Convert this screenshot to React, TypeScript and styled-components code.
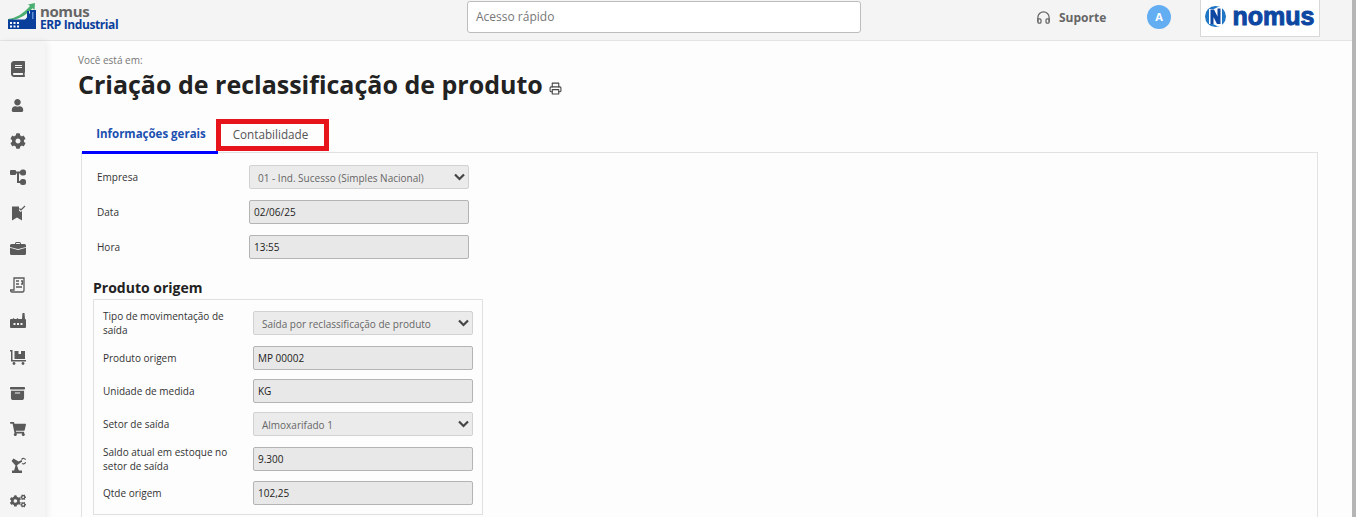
import React from 'react';
import styled, { createGlobalStyle } from 'styled-components';
import { FaBook, FaCog, FaCogs, FaShoppingCart, FaUser } from 'react-icons/fa';
import { BsArchiveFill, BsBriefcaseFill } from 'react-icons/bs';
import { FiHeadphones, FiPrinter } from 'react-icons/fi';

const GlobalStyle = createGlobalStyle`
  html, body {
    margin: 0;
    height: 517px;
    overflow: hidden;
    background: #fdfdfd;
    font-family: "Open Sans", "Liberation Sans", sans-serif;
  }
`;

const Page = styled.div`
  width: 1356px;
  height: 517px;
  display: grid;
  grid-template-columns: 1fr 4px;
  overflow: hidden;
`;

const Scrollbar = styled.div`
  background: #b5b5b5;
`;

const Main = styled.div`
  display: flex;
  flex-direction: column;
  min-width: 0;
`;

const Header = styled.header`
  height: 41px;
  box-sizing: border-box;
  flex: none;
  display: flex;
  align-items: flex-start;
  background: #f4f4f4;
  border-bottom: 1px solid #e4e4e4;
`;

const Brand = styled.div`
  width: 467px;
  flex: none;
  display: flex;
  padding: 3px 0 0 8px;
  gap: 4px;
  box-sizing: border-box;
`;

const BrandText = styled.div`
  display: flex;
  flex-direction: column;
  font-weight: 700;
  letter-spacing: -0.4px;
  padding-top: 1px;
  line-height: 14px;
`;

const BrandName = styled.span`
  font-size: 15px;
  color: #666;
`;

const BrandProduct = styled.span`
  font-size: 12px;
  color: #0b3f9c;
`;

const QuickAccess = styled.div`
  width: 394px;
  height: 32px;
  margin-top: 1px;
  flex: none;
  box-sizing: border-box;
  padding-left: 8px;
  line-height: 30px;
  font-size: 12px;
  color: #777;
  background: #fff;
  border: 1px solid #bdbdbd;
  border-radius: 3px;
`;

const Support = styled.div`
  margin: 9px 0 0 175px;
  width: 111px;
  flex: none;
  display: flex;
  align-items: center;
  gap: 8px;
  font-size: 12px;
  font-weight: 700;
  color: #666;
`;

const Avatar = styled.div`
  width: 24px;
  height: 24px;
  margin-top: 5px;
  border-radius: 50%;
  background: #63aef2;
  color: #fff;
  font-size: 11px;
  font-weight: 700;
  text-align: center;
  line-height: 24px;
  flex: none;
`;

const CompanyLogo = styled.div`
  width: 120px;
  height: 37px;
  margin-left: 29px;
  flex: none;
  box-sizing: border-box;
  display: flex;
  align-items: center;
  justify-content: center;
  gap: 7px;
  padding: 0 1px 3px 0;
  background: #fff;
  border: 1px solid #d8d8d8;
  border-top: 0;
  color: #0d47a1;
  font-family: "Liberation Sans", sans-serif;
  font-size: 25px;
  font-weight: 700;
  -webkit-text-stroke: 1px #0d47a1;
`;

const Body = styled.div`
  flex: 1;
  display: flex;
  min-height: 0;
`;

const Sidebar = styled.nav`
  width: 45px;
  flex: none;
  display: flex;
  flex-direction: column;
  align-items: center;
  padding-top: 10px;
  padding-right: 10px;
  box-sizing: border-box;
  background: #f5f5f5;
  box-shadow: 3px 0 6px rgba(0, 0, 0, 0.06);
`;

const NavIcon = styled.div`
  height: 36px;
  flex: none;
  display: flex;
  align-items: center;
  justify-content: center;
  color: #5a5a5a;
  font-size: 16px;
`;

const Content = styled.main`
  flex: 1;
  min-width: 0;
  padding: 13px 34px 0 33px;
`;

const Breadcrumb = styled.div`
  font-size: 10px;
  line-height: 13px;
  color: #777;
`;

const TitleRow = styled.div`
  display: flex;
  align-items: center;
  gap: 6px;
  height: 36px;
  margin-top: -1px;
`;

const Title = styled.h1`
  margin: 0;
  font-size: 25px;
  line-height: 36px;
  font-weight: 700;
  color: #222;
`;

const PrintIcon = styled.span`
  display: flex;
  margin-top: 9px;
  font-size: 13px;
  color: #444;
`;

const Tabs = styled.div`
  display: flex;
  align-items: flex-start;
  height: 35px;
  margin: 17px 0 0 4px;
`;

const ActiveTab = styled.div`
  position: relative;
  z-index: 1;
  box-sizing: border-box;
  width: 136px;
  height: 35px;
  padding: 0 0 4px 2px;
  display: flex;
  align-items: center;
  justify-content: center;
  font-size: 11.5px;
  font-weight: 700;
  color: #1b4fb0;
  border-bottom: 3px solid #0000ff;
`;

const MarkedTab = styled.div`
  position: relative;
  z-index: 1;
  box-sizing: border-box;
  width: 113px;
  height: 32px;
  margin-left: -2px;
  padding: 0 4px 2px 0;
  display: flex;
  align-items: center;
  justify-content: center;
  font-size: 11.7px;
  color: #555;
  border: 5px solid #e8141c;
`;

const Panel = styled.section`
  margin: -2px 0 0 3px;
  height: 400px;
  box-sizing: border-box;
  padding: 12px 11px 0;
  border: 1px solid #e2e2e2;
  border-bottom: 0;
  background: #fdfdfd;
`;

const TopFields = styled.div`
  display: flex;
  flex-direction: column;
  gap: 11px;
  padding-left: 4px;
  width: 372px;
`;

const Row = styled.div<{ $label: number; $height?: number }>`
  display: grid;
  grid-template-columns: ${(p) => p.$label}px 220px;
  align-items: center;
  height: ${(p) => p.$height ?? 24}px;
  font-size: 10px;
  line-height: 14px;
  color: #333;
`;

const TextField = styled.div`
  height: 24px;
  box-sizing: border-box;
  padding-left: 4px;
  font-size: 10px;
  line-height: 22px;
  color: #222;
  background: #e8e8e8;
  border: 1px solid #b4b4b4;
  border-radius: 2px;
`;

const SelectField = styled.div`
  height: 24px;
  box-sizing: border-box;
  padding: 0 3px 0 8px;
  display: flex;
  align-items: center;
  justify-content: space-between;
  font-size: 10px;
  color: #666;
  background: #ebebeb;
  border: 1px solid #d2d2d2;
  border-radius: 2px;
`;

const SelectValue = styled.span`
  margin-top: 2px;
`;

const SectionTitle = styled.h2`
  margin: 19px 0 0;
  font-size: 14px;
  line-height: 20px;
  font-weight: 700;
  color: #222;
`;

const Fieldset = styled.div`
  width: 390px;
  box-sizing: border-box;
  margin-top: 1px;
  padding: 9px;
  display: flex;
  flex-direction: column;
  gap: 9px;
  border: 1px solid #e0e0e0;
`;

const Chevron = () => (
  <svg width="11" height="8" viewBox="0 0 11 8">
    <path d="M1 1.5 5.500 6 10 1.500" fill="none" stroke="#444" strokeWidth="2.2" />
  </svg>
);

const FlowIcon = () => (
  <svg width="16" height="16" viewBox="0 0 16 16" fill="currentColor">
    <rect x="0" y="1" width="6" height="5" rx="1" />
    <rect x="10" y="0.500" width="6" height="6" rx="2.5" />
    <rect x="10" y="10" width="6" height="6" rx="2.5" />
    <path d="M5 2.500h6v2H9V12h2v2H7V4.500H5z" />
  </svg>
);

const BookmarkCheckIcon = () => (
  <svg width="16" height="16" viewBox="0 0 16 16" fill="currentColor">
    <path d="M2 1.500h7v4l1.500 1.500L12 6v9.500l-5-3-5 3z" />
    <path d="M9.500 3.500 11 5l4-4" fill="none" stroke="currentColor" strokeWidth="1.2" />
  </svg>
);

const ReceiptIcon = () => (
  <svg width="16" height="16" viewBox="0 0 16 16" fill="none" stroke="currentColor" strokeWidth="1.3">
    <path d="M4 13V1h10v12c0 1-.6 2-1.600 2H2c-1 0-1.500-1-1.500-2z" />
    <path d="M6 4h3M6 7h3M11 4h1.500v3H11M6 10h6" />
  </svg>
);

const FactoryIcon = () => (
  <svg width="16" height="16" viewBox="0 0 16 16" fill="currentColor">
    <path d="M12.500 0h2l.5 6h-3z" />
    <path
      fillRule="evenodd"
      d="M1 6h1.500l1-1 1 1h2l1-1 1 1H15a1 1 0 0 1 1 1v7a1 1 0 0 1-1 1H1a1 1 0 0 1-1-1V7a1 1 0 0 1 1-1zm2.500 4v2h2v-2zm3.500 0v2h2v-2zm3.500 0v2h2v-2z"
    />
  </svg>
);

const DollyIcon = () => (
  <svg width="16" height="16" viewBox="0 0 16 16" fill="currentColor">
    <path d="M0 1h2.500v10H16v1.500H1V2.500H0z" />
    <path fillRule="evenodd" d="M4.500 2H15v8H4.500zM8.500 2v3h2.500V2z" />
    <circle cx="4" cy="14.500" r="1.400" />
    <circle cx="13" cy="14.500" r="1.400" />
  </svg>
);

const RobotArmIcon = () => (
  <svg width="16" height="16" viewBox="0 0 16 16" fill="currentColor">
    <path d="M2 13.500h10V16H2z" />
    <path d="M4 14 5.500 8.500 1.500 4 3.500 1.500l5 3 3-1.500.8 1.500L8 7.500 7 8.500 9 14z" />
    <path d="M11.500 2.500c1.500-1.600 3.500-1.200 4 .3M12 6.500c1.500.8 3 .2 3.600-1.300" fill="none" stroke="currentColor" strokeWidth="1.200" />
  </svg>
);

const FactoryLogo = () => (
  <svg width="28" height="28" viewBox="0 0 28 28">
    <path d="M0 16C8 15 15 11 22 3l-2-1.500L27 0l-.5 7-2-1.800C17 13.500 9 17 0 17.500z" fill="#4caf72" />
    <path d="M0 16.500h17l2-2V8h2v3l1-1V7h6v19H0z" fill="#0b3f9c" />
    <rect x="24" y="9" width="1.500" height="7" fill="#5f8fd6" />
    <g fill="#fff">
      <rect x="2" y="19" width="2" height="2" />
      <rect x="5.500" y="19" width="2" height="2" />
      <rect x="9" y="19" width="2" height="2" />
      <rect x="2" y="22.500" width="2" height="2" />
      <rect x="5.500" y="22.500" width="2" height="2" />
      <rect x="9" y="22.500" width="2" height="2" />
    </g>
  </svg>
);

const NomusMark = () => (
  <svg width="21" height="21" viewBox="0 0 21 21">
    <circle cx="10.500" cy="10.500" r="10.500" fill="#1f76c4" />
    <path d="M4 3h5l4-2h4v19h-5L8 18H4z" fill="#fff" />
    <path d="M5.500 3.500h3.500l3.500 7V2.500h3V18H12L8.500 11v7h-3z" fill="#0d47a1" />
  </svg>
);

const navIcons = [
  <FaBook key="book" />,
  <FaUser key="user" size={13} />,
  <FaCog key="cog" />,
  <FlowIcon key="flow" />,
  <BookmarkCheckIcon key="bookmark" />,
  <BsBriefcaseFill key="case" />,
  <ReceiptIcon key="receipt" />,
  <FactoryIcon key="factory" />,
  <DollyIcon key="dolly" />,
  <BsArchiveFill key="archive" size={15} />,
  <FaShoppingCart key="cart" />,
  <RobotArmIcon key="robot" />,
  <FaCogs key="cogs" />,
];

const App = () => {
  return (
    <Page>
      <GlobalStyle />
      <Main>
        <Header>
          <Brand>
            <FactoryLogo />
            <BrandText>
              <BrandName>nomus</BrandName>
              <BrandProduct>ERP Industrial</BrandProduct>
            </BrandText>
          </Brand>
          <QuickAccess>Acesso rápido</QuickAccess>
          <Support>
            <FiHeadphones size={15} />
            Suporte
          </Support>
          <Avatar>A</Avatar>
          <CompanyLogo>
            <NomusMark />
            nomus
          </CompanyLogo>
        </Header>
        <Body>
          <Sidebar>
            {navIcons.map((icon) => (
              <NavIcon key={icon.key}>{icon}</NavIcon>
            ))}
          </Sidebar>
          <Content>
            <Breadcrumb>Você está em:</Breadcrumb>
            <TitleRow>
              <Title>Criação de reclassificação de produto</Title>
              <PrintIcon>
                <FiPrinter />
              </PrintIcon>
            </TitleRow>
            <Tabs>
              <ActiveTab>Informações gerais</ActiveTab>
              <MarkedTab>Contabilidade</MarkedTab>
            </Tabs>
            <Panel>
              <TopFields>
                <Row $label={152}>
                  Empresa
                  <SelectField>
                    <SelectValue>01 - Ind. Sucesso (Simples Nacional)</SelectValue>
                    <Chevron />
                  </SelectField>
                </Row>
                <Row $label={152}>
                  Data
                  <TextField>02/06/25</TextField>
                </Row>
                <Row $label={152}>
                  Hora
                  <TextField>13:55</TextField>
                </Row>
              </TopFields>
              <SectionTitle>Produto origem</SectionTitle>
              <Fieldset>
                <Row $label={150} $height={28}>
                  <span>
                    Tipo de movimentação de
                    <br />
                    saída
                  </span>
                  <SelectField>
                    <SelectValue>Saída por reclassificação de produto</SelectValue>
                    <Chevron />
                  </SelectField>
                </Row>
                <Row $label={150}>
                  Produto origem
                  <TextField>MP 00002</TextField>
                </Row>
                <Row $label={150}>
                  Unidade de medida
                  <TextField>KG</TextField>
                </Row>
                <Row $label={150}>
                  Setor de saída
                  <SelectField>
                    <SelectValue>Almoxarifado 1</SelectValue>
                    <Chevron />
                  </SelectField>
                </Row>
                <Row $label={150} $height={27}>
                  <span>
                    Saldo atual em estoque no
                    <br />
                    setor de saída
                  </span>
                  <TextField>9.300</TextField>
                </Row>
                <Row $label={150}>
                  Qtde origem
                  <TextField>102,25</TextField>
                </Row>
              </Fieldset>
            </Panel>
          </Content>
        </Body>
      </Main>
      <Scrollbar />
    </Page>
  );
};

export default App;
